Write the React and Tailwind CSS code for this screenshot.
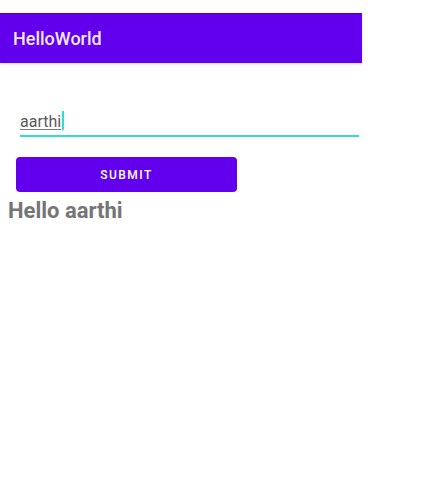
import React, { useState } from 'react';

const App = () => {
  const [name, setName] = useState('aarthi');

  return (
    <div className="w-[448px] h-[503px] bg-white font-['Roboto',sans-serif]">
      <div className="w-[362px]">
        <div className="h-[13px]" />
        <div className="h-[50px] bg-[#6200ee] border-t border-[#4a00c4] shadow-[0_1px_2px_rgba(0,0,0,0.18)] flex items-center pl-[13px]">
          <span className="text-[18px] font-medium text-[#f1e8ff] leading-none">HelloWorld</span>
        </div>

        <div className="pl-[20px] pr-[3px] pt-[47px]">
          <div className="flex items-end h-[20px]">
            <span className="text-[16px] leading-none text-[#5a5a5a] underline decoration-[#7a7a7a] underline-offset-[2px]">{name}</span>
            <span className="w-[2px] h-[19px] bg-[#2ee0c9] ml-[1px]" />
          </div>
          <div className="mt-[5px] h-[2px] bg-[#2ee0c9]" />
        </div>

        <div className="pl-[16px] pt-[20px]">
          <button
            onClick={() => setName(name)}
            className="w-[221px] h-[35px] rounded-[4px] bg-[#6200ee] text-white text-[12px] font-medium tracking-[0.12em] flex items-center justify-center"
          >
            SUBMIT
          </button>
        </div>

        <div className="pl-[8px] pt-[8px]">
          <span className="text-[22px] font-bold text-[#757575] leading-none">Hello {name}</span>
        </div>
      </div>
    </div>
  );
};

export default App;
